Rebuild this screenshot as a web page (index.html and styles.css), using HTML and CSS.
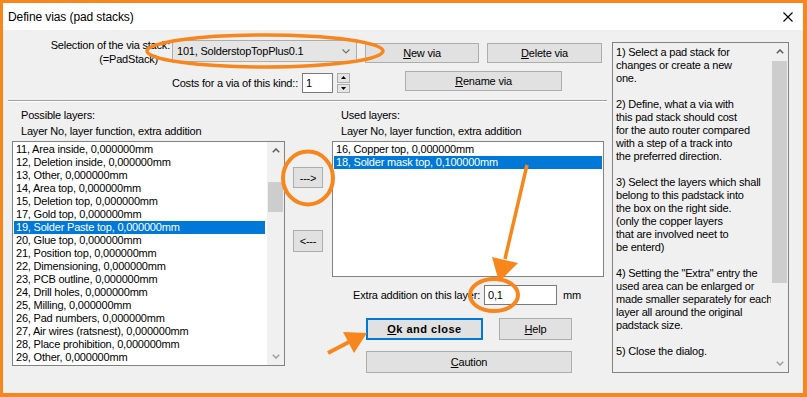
FILE: index.html
```html
<!DOCTYPE html>
<html>
<head>
  <meta charset="utf-8">
  <title>Define vias (pad stacks)</title>
  <link rel="stylesheet" href="styles.css">
</head>
<body>
<div class="window">
  <div class="titlebar">
    <span class="title">Define vias (pad stacks)</span>
    <svg class="close" width="10" height="10" viewBox="0 0 10 10"><path d="M0.5 0.5L9.5 9.5M9.5 0.5L0.5 9.5" stroke="#000" stroke-width="1.1" fill="none"/></svg>
  </div>
  <div class="body">
    <div class="main">
      <div class="top">
        <div class="row row-select">
          <div class="select-label">Selection of the via stack:<br><span class="pad">(=PadStack)</span></div>
          <div class="combo">
            <span>101, SolderstopTopPlus0.1</span>
            <svg width="8" height="5" viewBox="0 0 8 5"><polyline points="0.5,0.5 4,4 7.5,0.5" fill="none" stroke="#6d6d6d" stroke-width="1.1"/></svg>
          </div>
          <button class="btn btn-new"><u>N</u>ew via</button>
          <button class="btn btn-delete"><u>D</u>elete via</button>
        </div>
        <div class="row row-cost">
          <div class="cost-label">Costs for a via of this kind::</div>
          <div class="edit edit-cost">1</div>
          <div class="spin">
            <span class="spin-btn"><svg width="5" height="3" viewBox="0 0 5 3"><polygon points="0,3 2.5,0 5,3" fill="#000"/></svg></span>
            <span class="spin-btn"><svg width="5" height="3" viewBox="0 0 5 3"><polygon points="0,0 2.5,3 5,0" fill="#000"/></svg></span>
          </div>
          <button class="btn btn-rename"><u>R</u>ename via</button>
        </div>
      </div>
      <div class="sep"></div>
      <div class="lists">
        <div class="col col-possible">
          <div class="cap">Possible layers:</div>
          <div class="cap">Layer No, layer function, extra addition</div>
          <div class="listbox list-possible">
            <ul class="items">
              <li>11, Area inside, 0,000000mm</li>
              <li>12, Deletion inside, 0,000000mm</li>
              <li>13, Other, 0,000000mm</li>
              <li>14, Area top, 0,000000mm</li>
              <li>15, Deletion top, 0,000000mm</li>
              <li>17, Gold top, 0,000000mm</li>
              <li class="sel">19, Solder Paste top, 0,000000mm</li>
              <li>20, Glue top, 0,000000mm</li>
              <li>21, Position top, 0,000000mm</li>
              <li>22, Dimensioning, 0,000000mm</li>
              <li>23, PCB outline, 0,000000mm</li>
              <li>24, Drill holes, 0,000000mm</li>
              <li>25, Milling, 0,000000mm</li>
              <li>26, Pad numbers, 0,000000mm</li>
              <li>27, Air wires (ratsnest), 0,000000mm</li>
              <li>28, Place prohibition, 0,000000mm</li>
              <li>29, Other, 0,000000mm</li>
            </ul>
            <div class="vscroll">
              <div class="vs-arrow"><svg width="8" height="5" viewBox="0 0 8 5"><polyline points="0.8,4.2 4,1 7.2,4.2" fill="none" stroke="#606060" stroke-width="1.6"/></svg></div>
              <div class="vs-thumb thumb-possible"></div>
              <div class="vs-arrow vs-down"><svg width="8" height="5" viewBox="0 0 8 5"><polyline points="0.8,0.8 4,4 7.2,0.8" fill="none" stroke="#a0a0a0" stroke-width="1.6"/></svg></div>
            </div>
          </div>
        </div>
        <div class="col col-move">
          <button class="btn btn-move">---&gt;</button>
          <button class="btn btn-move btn-remove">&lt;---</button>
        </div>
        <div class="col col-used">
          <div class="cap">Used layers:</div>
          <div class="cap">Layer No, layer function, extra addition</div>
          <div class="listbox list-used">
            <ul class="items">
              <li>16, Copper top, 0,000000mm</li>
              <li class="sel">18, Solder mask top, 0,100000mm</li>
            </ul>
          </div>
          <div class="extra-row">
            <div class="extra-label">Extra addition on this layer:</div>
            <div class="edit edit-extra">0,1</div>
            <div class="unit">mm</div>
          </div>
          <div class="btn-row">
            <button class="btn btn-ok"><u>O</u>k and close</button>
            <button class="btn btn-help"><u>H</u>elp</button>
          </div>
          <button class="btn btn-caution"><u>C</u>aution</button>
        </div>
      </div>
    </div>
    <div class="help">
      <div class="help-text">1) Select a pad stack for
changes or create a new
one.

2) Define, what a via with
this pad stack should cost
for the auto router compared
with a step of a track into
the preferred direction.

3) Select the layers which shall
belong to this padstack into
the box on the right side.
(only the copper layers
that are involved neet to
be enterd)

4) Setting the "Extra" entry the
used area can be enlarged or
made smaller separately for each
layer all around the original
padstack size.

5) Close the dialog.</div>
      <div class="vscroll">
        <div class="vs-arrow"><svg width="8" height="5" viewBox="0 0 8 5"><polyline points="0.8,4.2 4,1 7.2,4.2" fill="none" stroke="#606060" stroke-width="1.6"/></svg></div>
        <div class="vs-thumb thumb-help"></div>
        <div class="vs-arrow vs-down"><svg width="8" height="5" viewBox="0 0 8 5"><polyline points="0.8,0.8 4,4 7.2,0.8" fill="none" stroke="#a0a0a0" stroke-width="1.6"/></svg></div>
      </div>
    </div>
  </div>
</div>

<!-- orange hand-drawn notes over the dialog -->
<svg class="marks" width="807" height="397" viewBox="0 0 807 397">
  <g fill="none" stroke="#f7861d" stroke-width="3.5">
    <ellipse cx="265" cy="51" rx="118" ry="16"/>
    <ellipse cx="308" cy="178" rx="25" ry="26.5" stroke-width="4"/>
    <ellipse cx="494" cy="295" rx="24" ry="16" stroke-width="4"/>
    <line x1="527" y1="165" x2="505" y2="259"/>
    <line x1="328" y1="353" x2="349" y2="342" stroke-width="4"/>
  </g>
  <g fill="#f7861d">
    <polygon points="499,282 492,257 518,263"/>
    <polygon points="367,333 343,332 354,353"/>
  </g>
</svg>
</body>
</html>
```

FILE: styles.css
```css
html, body {margin: 0; padding: 0; background: #f7861d;}
body {font-family: "Liberation Sans", Arial, sans-serif; font-size: 11px; letter-spacing: -0.2px; color: #000; position: relative;}

.window {margin: 3px 4px 4px 3px; width: 800px; height: 390px; display: flex; flex-direction: column; background: #f0f0f0;}
.titlebar {height: 27px; flex: none; background: #fff; display: flex; align-items: center; justify-content: space-between; padding: 0 10px 0 5px;}
.title {font-size: 12px; letter-spacing: -0.1px;}
.close {display: block;}

.body {flex: 1; display: flex;}
.main {width: 606px; flex: none;}
.top {height: 70px; box-sizing: border-box; padding-top: 10px;}
.row {display: flex; align-items: flex-start;}
.row-select {height: 22px;}
.select-label {width: 167px; text-align: right; line-height: 14px; margin-top: -2px; white-space: nowrap;}
.pad {display: inline-block; padding-right: 12px;}
.combo {margin-left: 2px; width: 185px; height: 22px; box-sizing: border-box; border: 1px solid #adadad; background: #e5e5e5; display: flex; align-items: center; justify-content: space-between; padding: 0 6px 0 4px;}
.combo svg {display: block;}

.btn {box-sizing: border-box; border: 1px solid #adadad; background: #e1e1e1; font: inherit; letter-spacing: inherit; color: #000; padding: 0; height: 20px; text-align: center; flex: none;}
.btn-new {margin-left: 8px; margin-top: 3px; width: 114px;}
.btn-delete {margin-left: 8px; margin-top: 3px; width: 115px;}

.row-cost {margin-top: 9px;}
.cost-label {width: 297px; box-sizing: border-box; text-align: right; padding-right: 2px; line-height: 20px; margin-top: 2px; white-space: nowrap;}
.edit {box-sizing: border-box; border: 1px solid #7a7a7a; background: #fff; height: 20px; line-height: 18px; padding-left: 3px;}
.edit-cost {margin-left: 2px; margin-top: 2px; width: 31px;}
.spin {margin-left: 4px; margin-top: 2px; width: 13px; height: 20px; display: flex; flex-direction: column; gap: 1px;}
.spin-btn {flex: 1; box-sizing: border-box; border: 1px solid #adadad; background: #e5e5e5; display: flex; align-items: center; justify-content: center;}
.spin-btn svg {display: block;}
.btn-rename {margin-left: 55px; width: 157px;}

.sep {margin-left: 5px; width: 599px; border-top: 1px solid #a0a0a0; border-bottom: 1px solid #fff;}

.lists {display: flex; padding-top: 5px;}
.col {flex: none;}
.cap {line-height: 16px; padding-left: 9px; white-space: nowrap;}
.col-possible {margin-left: 9px; width: 273px;}
.listbox {margin-top: 2px; box-sizing: border-box; border: 1px solid #828282; background: #fff; display: flex;}
.list-possible {height: 225px;}
.items {list-style: none; margin: 0; padding: 1px 2px 0 1px; flex: 1; overflow: hidden;}
.items li {height: 13px; line-height: 13px; padding-left: 2px; white-space: nowrap;}
.items .sel {background: #0078d7; color: #fff;}
.list-used .items {padding: 1px;}

.vscroll {width: 17px; flex: none; background: #f0f0f0; display: flex; flex-direction: column;}
.vs-arrow {height: 17px; flex: none; display: flex; align-items: center; justify-content: center;}
.vs-arrow svg {display: block;}
.vs-down {margin-top: auto;}
.vs-thumb {background: #cdcdcd; margin: 0 1px;}
.thumb-possible {margin-top: 23px; height: 30px;}
.thumb-help {margin-top: 1px; height: 222px;}

.col-move {margin-left: 8px; width: 30px; display: flex; flex-direction: column; padding-top: 60px;}
.btn-move {width: 30px; height: 21px;}
.btn-remove {margin-top: 42px; height: 22px;}

.col-used {margin-left: 9px; width: 272px;}
.list-used {height: 136px;}
.extra-row {margin-top: 8px; display: flex; align-items: center; height: 20px;}
.extra-label {width: 148px; text-align: right; white-space: nowrap;}
.edit-extra {margin-left: 4px; width: 73px; padding-left: 3px;}
.unit {margin-left: 6px;}
.btn-row {margin-top: 13px; display: flex; padding-left: 34px;}
.btn-ok {width: 117px; height: 22px; border: 2px solid #0078d7; font-weight: bold; letter-spacing: 0.5px;}
.btn-help {margin-left: 16px; width: 73px; height: 22px;}
.btn-caution {display: block; margin: 11px 0 0 34px; width: 206px; height: 22px;}

.help {margin: 12px 0 0 3px; width: 177px; height: 331px; box-sizing: border-box; border: 1px solid #828282; background: #f0f0f0; display: flex;}
.help-text {flex: 1; padding: 3px 0 0 3px; white-space: pre; line-height: 13px; overflow: hidden;}

.marks {position: absolute; left: 0; top: 0; pointer-events: none;}
```
